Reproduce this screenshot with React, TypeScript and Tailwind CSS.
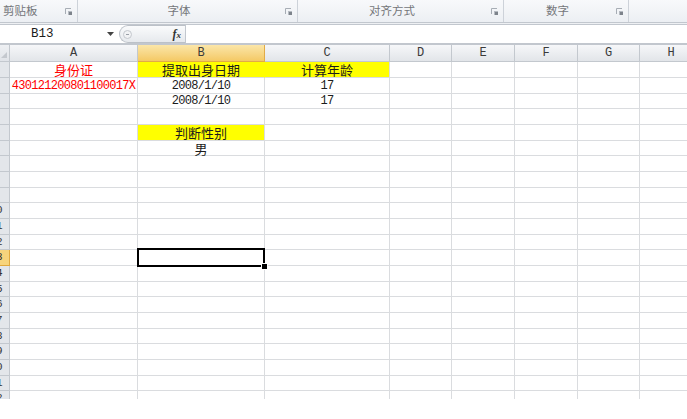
import React from 'react';

const cjk = "font-['Noto_Sans_CJK_SC',sans-serif]";
const mono = "font-['Liberation_Mono','Noto_Sans_CJK_SC',monospace]";

const columns = [
  { key: 'A', w: 'w-[128px]' },
  { key: 'B', w: 'w-[127px]' },
  { key: 'C', w: 'w-[125px]' },
  { key: 'D', w: 'w-[62px]' },
  { key: 'E', w: 'w-[63px]' },
  { key: 'F', w: 'w-[63px]' },
  { key: 'G', w: 'w-[62px]' },
  { key: 'H', w: 'w-[63px]' },
];

const rowHeights = ['h-[16px]', 'h-[16px]', 'h-[15px]'];

type Cell = { text: string; red?: boolean; fill?: boolean; cjk?: boolean; joinRight?: boolean };

const data: Record<number, Record<string, Cell>> = {
  1: {
    A: { text: '身份证', red: true, cjk: true },
    B: { text: '提取出身日期', fill: true, cjk: true, joinRight: true },
    C: { text: '计算年龄', fill: true, cjk: true },
  },
  2: {
    A: { text: '430121200801100017X', red: true },
    B: { text: '2008/1/10' },
    C: { text: '17' },
  },
  3: {
    B: { text: '2008/1/10' },
    C: { text: '17' },
  },
  5: { B: { text: '判断性别', fill: true, cjk: true } },
  6: { B: { text: '男', cjk: true } },
};

const Launcher = () => (
  <svg width="7" height="7" viewBox="0 0 7 7" className="shrink-0 mx-[5px]">
    <path d="M0.5 6V0.5H6" stroke="#a7adb5" fill="none" />
    <rect x="3" y="3" width="4" height="4" fill="#b5bac1" />
    <rect x="4" y="4" width="3" height="3" fill="#7d838b" />
  </svg>
);

const RibbonGroup = ({ label, w, left }: { label?: string; w: string; left?: boolean }) => (
  <div className={`${w} h-full flex items-center border-r border-[#cdd2d9] shrink-0`}>
    {label && (
      <>
        <div className={`flex-1 text-[11.5px] text-[#74767a] ${cjk} ${left ? 'pl-[3px] text-left' : 'text-center'}`}>
          {label}
        </div>
        <Launcher />
      </>
    )}
  </div>
);

const SheetRow = ({ n }: { n: number }) => {
  const h = rowHeights[(n - 1) % 3];
  const row = data[n] || {};
  const active = n === 13;
  return (
    <div className={`flex ${h} shrink-0`}>
      <div
        className={`w-[10px] shrink-0 overflow-hidden border-r border-b flex items-center ${
          active ? 'bg-[#f7d47c] border-[#e0a93e]' : 'bg-[#e3e6ea] border-[#c3c8ce]'
        }`}
      >
        <div className={`w-[26px] ml-[-17px] shrink-0 text-center text-[11px] leading-none text-[#333] ${mono}`}>{n}</div>
      </div>
      {columns.map((c) => {
        const cell = row[c.key];
        const bg = cell?.fill ? 'bg-[#ffff00]' : 'bg-white';
        const br = cell?.joinRight ? 'border-r-[#ffff00]' : 'border-r-[#dadcdf]';
        return (
          <div
            key={c.key}
            className={`${c.w} shrink-0 relative border-r border-b border-b-[#dadcdf] ${br} ${bg} flex items-center justify-center overflow-visible`}
          >
            {cell && (
              <span
                className={`whitespace-nowrap leading-none ${cell.red ? 'text-[#ff0000]' : 'text-[#1c1c1c]'} ${
                  cell.cjk ? `${cjk} text-[13px]` : `${mono} text-[12px] tracking-[-0.7px]`
                }`}
              >
                {cell.text}
              </span>
            )}
            {active && c.key === 'B' && (
              <div className="absolute z-10 left-[-1px] top-[-2px] right-[-1px] bottom-[-2px] border-2 border-black">
                <div className="absolute right-[-5px] bottom-[-5px] w-[7px] h-[7px] bg-black border border-white" />
              </div>
            )}
          </div>
        );
      })}
    </div>
  );
};

export default function App() {
  const rows = Array.from({ length: 22 }, (_, i) => i + 1);
  return (
    <div className="w-[687px] h-[419px] overflow-hidden bg-white flex flex-col">
      {/* ribbon group labels */}
      <div className="h-[22px] flex shrink-0 bg-gradient-to-b from-[#f8f9fb] to-[#eceff3]">
        <RibbonGroup label="剪贴板" w="w-[78px]" left />
        <RibbonGroup label="字体" w="w-[220px]" />
        <RibbonGroup label="对齐方式" w="w-[206px]" />
        <RibbonGroup label="数字" w="w-[125px]" />
        <div className="flex-1" />
      </div>
      <div className="h-[3px] shrink-0 border-t border-b border-[#c2c7ce] bg-[#eef0f3]" />

      {/* formula bar */}
      <div className="h-[18px] shrink-0 flex items-stretch bg-white">
        <div className="w-[119px] shrink-0 flex items-center relative">
          <span className={`ml-[31px] text-[12.5px] text-[#1c1c1c] ${mono}`}>B13</span>
          <svg width="7" height="4" viewBox="0 0 7 4" className="ml-auto mr-[5px]">
            <path d="M0 0H7L3.5 4Z" fill="#444" />
          </svg>
        </div>
        <div className="w-[66px] shrink-0 flex items-center rounded-l-full border border-r-0 border-[#bcc1c8] bg-gradient-to-b from-[#fafbfc] to-[#e6e9ed]">
          <div className="w-[9px] h-[9px] ml-[3px] rounded-full border border-[#c4c8ce] bg-[#f1f2f4] flex items-center justify-center">
            <div className="w-[3px] h-px bg-[#9aa0a8]" />
          </div>
          <span className="ml-auto mr-[4px] text-[12px] italic font-bold text-[#333] font-['Liberation_Serif',serif] leading-none">
            f<span className="text-[9px]">x</span>
          </span>
        </div>
        <div className="flex-1 border-l border-[#c2c7ce] bg-white" />
      </div>
      <div className="h-[2px] shrink-0 border-t border-b border-[#c2c7ce] bg-[#eef0f3]" />

      {/* column headers */}
      <div className="flex h-[17px] shrink-0">
        <div className="w-[10px] shrink-0 bg-gradient-to-b from-[#eef0f3] to-[#e0e3e8] border-r border-b border-[#c3c8ce] flex items-end justify-start">
          <svg width="6" height="6" viewBox="0 0 6 6" className="mb-[3px] ml-[1px]">
            <path d="M6 0V6H0Z" fill="#c4c8ce" />
          </svg>
        </div>
        {columns.map((c) => (
          <div
            key={c.key}
            className={`${c.w} shrink-0 border-r border-b flex items-center justify-center text-[12px] text-[#3a3a3a] ${mono} ${
              c.key === 'B'
                ? 'bg-gradient-to-b from-[#fbe6a8] to-[#f4c964] border-[#e1ab47]'
                : 'bg-gradient-to-b from-[#f6f7f9] to-[#e2e5e9] border-[#c3c8ce]'
            }`}
          >
            {c.key}
          </div>
        ))}
      </div>

      {/* rows */}
      <div className="h-[337px] shrink-0 overflow-hidden flex flex-col">
        {rows.map((n) => (
          <SheetRow key={n} n={n} />
        ))}
      </div>
      <div className="flex-1 bg-white" />
    </div>
  );
}
